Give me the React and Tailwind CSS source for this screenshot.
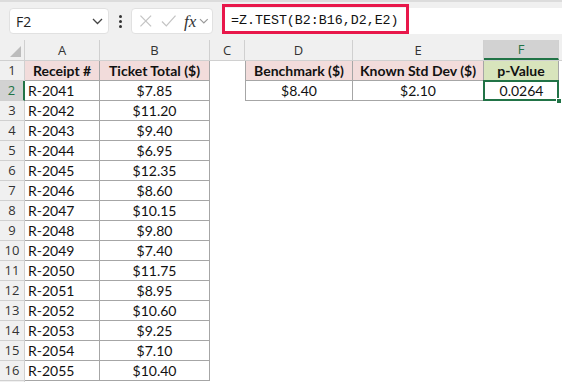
import React from "react";

const rows = [
  ["R-2041", "$7.85"],
  ["R-2042", "$11.20"],
  ["R-2043", "$9.40"],
  ["R-2044", "$6.95"],
  ["R-2045", "$12.35"],
  ["R-2046", "$8.60"],
  ["R-2047", "$10.15"],
  ["R-2048", "$9.80"],
  ["R-2049", "$7.40"],
  ["R-2050", "$11.75"],
  ["R-2051", "$8.95"],
  ["R-2052", "$10.60"],
  ["R-2053", "$9.25"],
  ["R-2054", "$7.10"],
  ["R-2055", "$10.40"],
];

const cols = "grid grid-cols-[25px_75px_110px_35px_108px_131px_75px_1fr] auto-rows-[20px]";
const cellFont = "font-['Lato','Liberation_Sans',sans-serif] text-[14px] leading-none text-[#111]";
const hdrFont = "font-['Open_Sans',sans-serif] text-[13px] leading-none";

function Chevron({ className }) {
  return (
    <svg className={className} width="11" height="7" viewBox="0 0 11 7" fill="none">
      <path d="M1 1l4.5 4.5L10 1" stroke="#444" strokeWidth="1.3" />
    </svg>
  );
}

export default function App() {
  return (
    <div className="w-[562px] h-[382px] bg-white overflow-hidden">
      {/* formula bar */}
      <div className="h-[40px] bg-[#f0f0f0] border-t-2 border-[#dcdcdc] flex items-center relative">
        <div className="ml-[9px] w-[100px] h-[26px] bg-white border border-[#e1e1e1] rounded-[4px] flex items-center justify-between pl-[6px] pr-[5px]">
          <span className="font-['Open_Sans',sans-serif] text-[14px] text-[#222]">F2</span>
          <Chevron />
        </div>
        <div className="w-[22px] flex flex-col items-center gap-[2px]">
          <span className="w-[3px] h-[3px] bg-[#333] rounded-full" />
          <span className="w-[3px] h-[3px] bg-[#333] rounded-full" />
          <span className="w-[3px] h-[3px] bg-[#333] rounded-full" />
        </div>
        <div className="w-[82px] h-[26px] bg-white border border-[#e1e1e1] rounded-[4px] flex items-center pl-[7px] pr-[3px]">
          <svg width="14" height="14" viewBox="0 0 14 14">
            <path d="M1.5 1.5l11 11M12.5 1.5l-11 11" stroke="#c4c4c4" strokeWidth="1.3" />
          </svg>
          <svg className="ml-[8px]" width="16" height="14" viewBox="0 0 16 14">
            <path d="M1 7.5l4.5 4.5L15 1.5" stroke="#c4c4c4" strokeWidth="1.3" fill="none" />
          </svg>
          <span className="ml-[8px] font-['Liberation_Serif',serif] italic text-[17px] text-[#333] leading-none">fx</span>
          <svg className="ml-[3px]" width="10" height="6" viewBox="0 0 10 6" fill="none">
            <path d="M1 1l4 4 4-4" stroke="#999" strokeWidth="1.2" />
          </svg>
        </div>
        <div className="ml-[9px] flex-1 h-[26px] bg-white relative">
          <div className="absolute left-0 top-[-4px] w-[187px] h-[30px] border-[3px] border-[#e8174a]" />
          <span className="absolute left-[9px] top-[4px] font-['Liberation_Mono',monospace] text-[13.3px] text-[#111] leading-[18px]">=Z.TEST(B2:B16,D2,E2)</span>
        </div>
      </div>

      {/* column headers */}
      <div className={`${cols} bg-[#f0f0f0] border-b border-[#d0d0d0] ${hdrFont} text-[#333]`}>
        <div className="border-r border-[#d0d0d0] relative">
          <svg className="absolute right-[3px] bottom-[3px]" width="11" height="11" viewBox="0 0 11 11">
            <path d="M11 0V11H0Z" fill="#bcbcbc" />
          </svg>
        </div>
        {["A", "B", "C", "D", "E"].map((c) => (
          <div key={c} className="border-r border-[#d0d0d0] flex items-center justify-center">{c}</div>
        ))}
        <div className="bg-[#d2d2d2] border-r border-[#d0d0d0] border-b-2 border-b-[#217346] flex items-center justify-center text-[#217346]">F</div>
        <div />
      </div>

      {/* rows */}
      <div className={cols}>
        {/* row 1 */}
        <div className={`bg-[#f0f0f0] border-r border-b border-[#d0d0d0] flex items-center justify-center ${hdrFont} text-[#333]`}>1</div>
        <div className={`bg-[#f2dcdb] border-r border-b border-[#a6a6a6] flex items-center justify-center font-bold ${cellFont}`}>Receipt #</div>
        <div className={`bg-[#f2dcdb] border-r border-b border-[#a6a6a6] flex items-center justify-center font-bold ${cellFont}`}>Ticket Total ($)</div>
        <div />
        <div className={`bg-[#f2dcdb] border-l border-r border-b border-[#a6a6a6] flex items-center justify-center font-bold ${cellFont}`}>Benchmark ($)</div>
        <div className={`bg-[#f2dcdb] border-r border-b border-[#a6a6a6] flex items-center justify-center font-bold ${cellFont}`}>Known Std Dev ($)</div>
        <div className={`bg-[#d8e4bc] border-r border-b border-[#a6a6a6] flex items-center justify-center font-bold ${cellFont}`}>p-Value</div>
        <div />

        {rows.map(([a, b], i) => {
          const n = i + 2;
          const sel = n === 2;
          return (
            <React.Fragment key={a}>
              <div
                className={`border-b border-[#d0d0d0] flex items-center justify-center ${hdrFont} ${
                  sel ? "bg-[#d2d2d2] text-[#217346] border-r-2 border-r-[#217346]" : "bg-[#f0f0f0] text-[#333] border-r border-r-[#d0d0d0]"
                }`}
              >
                {n}
              </div>
              <div className={`border-r border-b border-[#a6a6a6] flex items-center pl-[3px] ${cellFont}`}>{a}</div>
              <div className={`border-r border-b border-[#a6a6a6] flex items-center justify-center ${cellFont}`}>{b}</div>
              <div />
              {sel ? (
                <>
                  <div className={`border-l border-r border-b border-[#a6a6a6] flex items-center justify-center ${cellFont}`}>$8.40</div>
                  <div className={`border-r border-b border-[#a6a6a6] flex items-center justify-center ${cellFont}`}>$2.10</div>
                  <div className={`relative flex items-center justify-center ${cellFont}`}>
                    <div className="absolute inset-[-1px_0_0_-1px] border-2 border-[#217346]" />
                    <div className="absolute right-[-3px] bottom-[-3px] w-[6px] h-[6px] bg-[#217346] border border-white" />
                    0.0264
                  </div>
                  <div />
                </>
              ) : (
                <>
                  <div />
                  <div />
                  <div />
                  <div />
                </>
              )}
            </React.Fragment>
          );
        })}
        <div className="bg-[#f0f0f0] border-r border-[#d0d0d0]" />
      </div>
    </div>
  );
}
